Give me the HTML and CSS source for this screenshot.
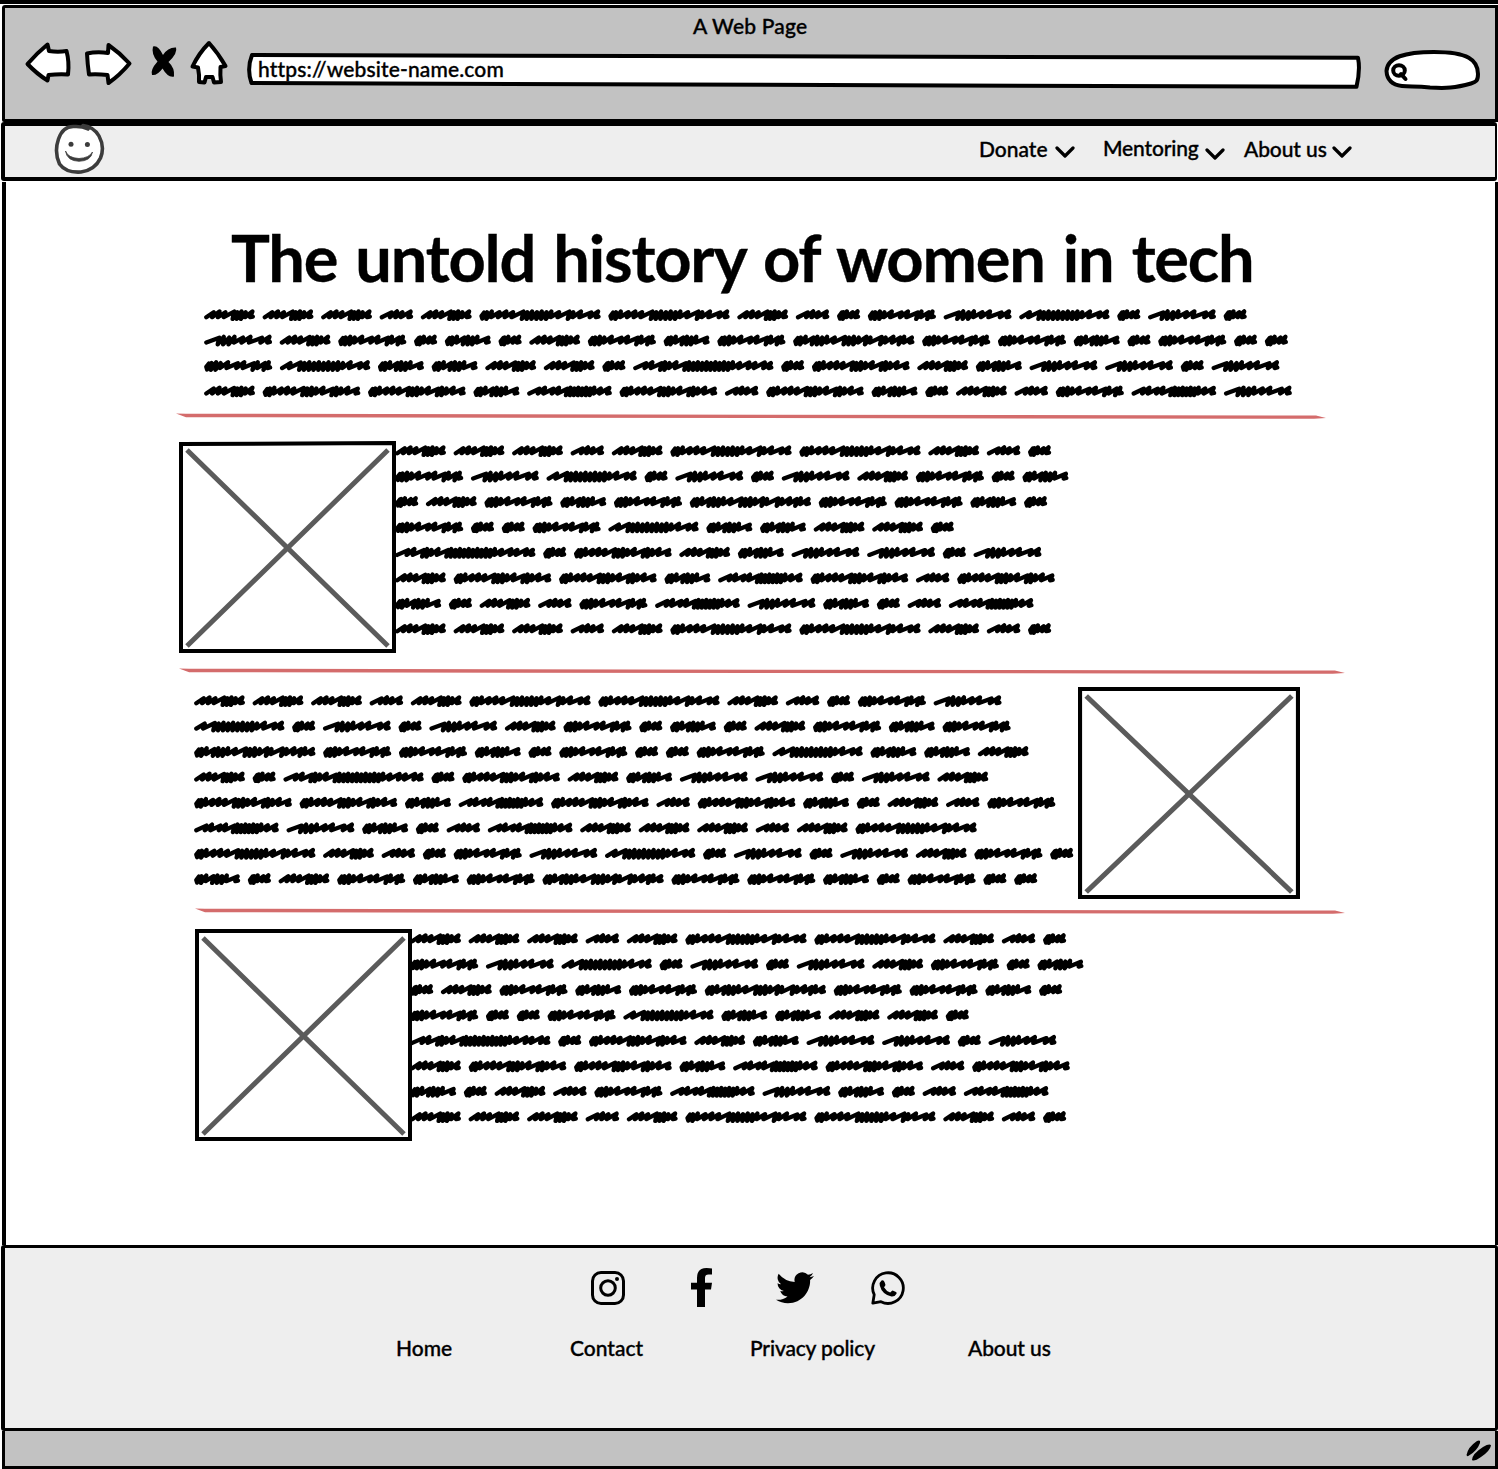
FILE: index.html
```html
<!DOCTYPE html>
<html lang="en">
<head>
<meta charset="utf-8">
<title>A Web Page</title>
<link rel="stylesheet" href="styles.css">
</head>
<body>
<div class="window">
  <header class="chrome">
    <div class="chrome-title">A Web Page</div>
    <div class="toolbar">
      <svg class="tools" viewBox="20 36 215 52" width="215" height="52">
        <g class="ink-outline">
          <path d="M27.5 64 Q37 53 47.5 44.5 L49 51 Q58 52.500 66.500 51 Q69.500 62 68 74.500 Q58 74 48.500 75 L47.500 80.500 Q37 74 27.500 64Z"/>
          <path d="M87 53.500 Q97 51.500 108 53 L108.500 45 Q120 53 129.500 63.500 Q120 75 108.500 83 L107.500 75 Q98 74 89 74.500 Q87.500 64 87 53.500Z"/>
          <path d="M209 43 Q218 53 225.500 66 L220.500 67 Q220 75 221 82 L214 82.500 L212.500 77 H206 L204.500 82.500 L199 82 Q199.500 75 198 67.500 L192.500 66.500 Q199 53 209 43Z"/>
        </g>
        <path d="M153 46.500 Q158 44.500 163 55 Q168 47 176 47.500 Q178 53 168.500 62 Q175 68 174 76.500 Q168 78 162.500 68.500 Q157 76 152 75 Q150 70 157.500 61.500 Q151 54 153 46.500Z"/>
      </svg>
      <div class="address">
        <svg class="address-frame" viewBox="246 51 1116 40" width="1116" height="40">
          <path class="ink-outline" d="M252 55 Q800 54.500 1358 57.800 Q1360.500 70 1356.500 86.800 Q800 86.500 251.500 83 Q246.500 69 252 55Z"/>
        </svg>
        <span class="address-text">https://website-name.com</span>
      </div>
      <svg class="search" viewBox="1382 48 100 44" width="100" height="44">
        <g class="ink-outline">
          <path d="M1386.500 71 C1387.500 57 1405 52 1434 52 C1468 52 1478 60 1478 74 C1478 81 1476 82 1471 83.500 C1455 88 1446 88.500 1430 87.500 C1415 86 1410 87 1402 86 C1393 85 1387 80 1386.500 71Z"/>
          <ellipse cx="1399" cy="70.500" rx="5.800" ry="5.200"/>
          <path d="M1401 74 L1405.500 79"/>
        </g>
      </svg>
    </div>
  </header>

  <nav class="site-nav">
    <svg class="logo" viewBox="53 122 54 54" width="54" height="54">
      <path class="face" d="M83 125.500 Q94 127 99 136 Q105 147 100.500 158 Q95 170 81 172 Q66 173 59.500 164 Q54 152 58.500 139 Q63 126 74 126.500 Q82 126 88 129"/>
      <circle cx="71" cy="144.200" r="2.500"/><circle cx="87.400" cy="144.500" r="2.500"/>
      <path class="smile" d="M65.500 151 Q68 158 79 158.500 Q89 158 92.500 152 Q91 161 79 161.300 Q67 161 65.500 151Z"/>
    </svg>
    <div class="menu">
      <span class="menu-item donate">Donate</span>
      <svg class="chevron" viewBox="0 0 20 12" width="20" height="12"><path d="M2 2 L10 10 L18 2"/></svg>
      <span class="menu-item mentoring">Mentoring</span>
      <svg class="chevron low" viewBox="0 0 20 12" width="20" height="12"><path d="M2 2 L10 10 L18 2"/></svg>
      <span class="menu-item about">About us</span>
      <svg class="chevron" viewBox="0 0 20 12" width="20" height="12"><path d="M2 2 L10 10 L18 2"/></svg>
    </div>
  </nav>

  <main class="page">
    <h1>The untold history of women in tech</h1>
    <div class="scribble intro" data-words="AAABACCABDEFGDFD FAEDHDAEHEIEEHDEDD EGHHAADJDKAHFFDF AKKHLKBKHDABELF"></div>
    <svg class="rule rule-one" viewBox="0 0 1150 6" preserveAspectRatio="none"><path d="M0 .500 L10 .700 L1140 2.600 L1150 5 L1138 5.800 L10 4.200Z"/></svg>

    <section class="story story-one">
      <svg class="picture" viewBox="0 0 217 212" preserveAspectRatio="none"><path class="frame" d="M2 3 L215 2 V210 H2Z"/><path class="cross" d="M8 9 L209 205 M209 9 L8 205"/></svg>
      <div class="scribble" data-words="AAABACCABD EFGDFDFAEDH DAEHEIEEHD EDDEGHHAAD JDKAHFFDF AKKHLKBK HDABELFHDBL AAABACCABD"></div>
    </section>
    <svg class="rule rule-two" viewBox="0 0 1150 6" preserveAspectRatio="none"><path d="M0 .500 L10 .700 L1140 2.600 L1150 5 L1138 5.800 L10 4.200Z"/></svg>

    <section class="story story-two">
      <div class="scribble" data-words="AAABACCABDEF GDFDFAEDHDAEHE IEEHDEDDEGHHA ADJDKAHFFDFA KKHLKBKHDABE LFHDBLAAABAC CABDEFGDFDFAED HDAEHEIEEHDEDD"></div>
      <svg class="picture" viewBox="0 0 217 212" preserveAspectRatio="none"><path class="frame" d="M2 2 H215 V210 H2Z"/><path class="cross" d="M8 9 L209 205 M209 9 L8 205"/></svg>
    </section>
    <svg class="rule rule-three" viewBox="0 0 1150 6" preserveAspectRatio="none"><path d="M0 .500 L10 .700 L1140 2.600 L1150 5 L1138 5.800 L10 4.200Z"/></svg>

    <section class="story story-three">
      <svg class="picture" viewBox="0 0 217 212" preserveAspectRatio="none"><path class="frame" d="M2 2 H215 V210 H2Z"/><path class="cross" d="M8 9 L209 205 M209 9 L8 205"/></svg>
      <div class="scribble" data-words="AAABACCABD EFGDFDFAEDH DAEHEIEEHD EDDEGHHAAD JDKAHFFDF AKKHLKBK HDABELFHDBL AAABACCABD"></div>
    </section>
  </main>

  <footer class="footer">
    <div class="social">
      <svg class="instagram" viewBox="0 0 34 34" width="34" height="34"><rect x="1.500" y="1.500" width="31" height="31" rx="8.500"/><circle cx="17" cy="17" r="7.300"/><circle class="dot" cx="26" cy="8" r="2"/></svg>
      <svg class="facebook" viewBox="0 0 21 39" width="21" height="39"><path d="M6 39 V21.500 H0 V14.800 H6 V10 Q6 0 15.500 0 Q19 0 21 .600 V6.600 H17.500 Q14 6.600 14 10 V14.800 H21 L20 21.500 H14 V39Z"/></svg>
      <svg class="twitter" viewBox="0 2 16 13.200" width="38" height="32"><path d="M5.026 15c6.038 0 9.341-5.003 9.341-9.334 0-.14 0-.282-.006-.422A6.685 6.685 0 0 0 16 3.542a6.658 6.658 0 0 1-1.889.518 3.301 3.301 0 0 0 1.447-1.817 6.533 6.533 0 0 1-2.087.793A3.286 3.286 0 0 0 7.875 6.03a9.325 9.325 0 0 1-6.767-3.429 3.289 3.289 0 0 0 1.018 4.382A3.323 3.323 0 0 1 .64 6.575v.045a3.288 3.288 0 0 0 2.632 3.218 3.203 3.203 0 0 1-.865.115 3.230 3.230 0 0 1-.614-.057 3.283 3.283 0 0 0 3.067 2.277A6.588 6.588 0 0 1 .78 13.580a6.320 6.320 0 0 1-.78-.045A9.344 9.344 0 0 0 5.026 15z"/></svg>
      <svg class="whatsapp" viewBox="0 0 34 34" width="34" height="34"><path class="bubble" d="M3.200 23.700 A15.300 15.300 0 1 1 10 30.700 L1.800 32.200Z"/><path d="M10.500 9.500 Q12.800 8.800 13.500 11 L14.400 13.500 Q14.700 14.500 13 16.300 Q15.500 20.500 19.200 21.600 L20.800 19.900 Q21.300 19.300 22.200 19.700 L25 21 Q26 21.600 25.500 22.700 Q24 25.800 20.500 25.500 Q11 23.500 8.800 14.500 Q8.300 11 10.500 9.500Z"/></svg>
    </div>
    <div class="links">
      <span class="link home">Home</span>
      <span class="link contact">Contact</span>
      <span class="link privacy">Privacy policy</span>
      <span class="link about-us">About us</span>
    </div>
  </footer>
  <div class="status">
    <svg viewBox="1464 1438 30 26" width="30" height="26"><path d="M1466.500 1455 Q1468 1447 1477 1441 Q1481 1439.500 1480 1443 Q1477 1451 1469 1455.500 Q1467 1457 1466.500 1455ZM1472 1460 Q1472 1454 1483 1447 Q1490 1443 1491 1445.500 Q1490 1451 1481 1457 Q1474 1462 1472 1460Z"/></svg>
  </div>
</div>
<script src="scribble.js"></script>
</body>
</html>
```
FILE: styles.css
```css
* { box-sizing: border-box; }
body { margin: 0; background: #fff; color: #000; font-family: Lato, "Open Sans", sans-serif; font-size: 21px; line-height: 26px; -webkit-text-stroke: .35px #000; }
svg { display: block; flex: none; }
.window { width: 1498px; height: 1469px; border-top: 4px solid #000; overflow: hidden; }

.ink-outline { fill: #fff; stroke: #000; stroke-width: 4; stroke-linejoin: round; stroke-linecap: round; }

.chrome { height: 117px; margin: 1px 0 0 2px; background: #c2c2c2; border: 3px solid #000; border-radius: 3px 0 0 2px; }
.chrome-title { margin-left: 688px; padding-top: 5px; width: 130px; height: 28px; font-weight: 500; letter-spacing: .2px; white-space: nowrap; }
.toolbar { display: flex; height: 56px; }
.tools { margin-left: 15px; }
.address { position: relative; margin: 15px 0 0 11px; width: 1116px; height: 40px; }
.address-frame { position: absolute; left: 0; top: 0; }
.address-text { position: relative; display: block; padding: 5px 0 0 12px; font-weight: 500; letter-spacing: .15px; white-space: nowrap; }
.search { margin: 12px 0 0 20px; }

.site-nav { display: flex; height: 59px; margin: 0 1px 0 1px; background: #eee; border: 4px solid #000; border-right-width: 2px; border-radius: 3px; }
.logo { margin: -4px 0 0 48px; fill: #3c3c3c; }
.face { fill: #fff; stroke: #3c3c3c; stroke-width: 3.6; stroke-linecap: round; }
.smile { stroke: #3c3c3c; stroke-width: .8; }
.menu { display: flex; padding: 10px 0 0 872px; font-weight: 500; white-space: nowrap; }
.menu-item.donate { width: 76px; }
.menu-item.mentoring { width: 102px; margin: -1px 0 0 28px; letter-spacing: -.15px; }
.menu-item.about { width: 88px; margin-left: 19px; letter-spacing: -.1px; }
.chevron { margin-top: 10px; fill: none; stroke: #000; stroke-width: 3.2; stroke-linecap: round; stroke-linejoin: round; }
.chevron.low { margin-top: 12px; }

.page { height: 1063px; margin: 1px 0 0 2px; border-left: 4px solid #000; border-right: 3px solid #000; background: #fff; }
h1 { margin: 0; padding: 33px 0 0 225px; height: 119px; font-size: 65px; line-height: 84px; font-weight: 700; letter-spacing: -1.2px; word-spacing: 3.5px; white-space: nowrap; }
.scribble svg { overflow: visible; fill: none; stroke: #000; stroke-width: 4.3; stroke-linejoin: round; stroke-linecap: round; }
.intro { margin: -1px 0 0 198px; width: 1100px; height: 113px; }
.rule { height: 6px; fill: #d46c6c; }
.rule-one { margin-left: 170px; width: 1150px; }
.rule-two { margin: 15px 0 0 173px; width: 1166px; }
.rule-three { margin: 9px 0 0 189px; width: 1150px; }
.story { display: flex; }
.picture { width: 217px; height: 212px; }
.frame { fill: #fff; stroke: #000; stroke-width: 4; }
.cross { fill: none; stroke: #5b5b5b; stroke-width: 5; }
.story-one { margin: 22px 0 0 173px; }
.story-one .scribble { margin: -5px 0 0 -1px; }
.story-two { margin: 13px 0 0 189px; }
.story-two .scribble { width: 884px; margin: -1px 0 0 -1px; }
.story-two .picture { width: 222px; }
.story-three { margin: 15px 0 0 189px; }
.story-three .scribble { margin: -5px 0 0 -2px; }

.footer { height: 186px; margin: 0 0 0 1px; background: #eee; border: 3px solid #000; border-left-width: 4px; border-radius: 3px; }
.social { display: flex; align-items: center; height: 39px; margin: 20px 0 0 586px; }
.instagram { fill: none; stroke: #000; stroke-width: 3; }
.instagram .dot { fill: #000; stroke: none; }
.facebook { margin-left: 66px; }
.twitter { margin-left: 64px; }
.whatsapp { margin-left: 57px; }
.bubble { fill: none; stroke: #000; stroke-width: 2.8; stroke-linejoin: round; }
.links { display: flex; margin: 28px 0 0 391px; font-weight: 500; white-space: nowrap; }
.home { width: 174px; }
.contact { width: 180px; }
.privacy { width: 218px; letter-spacing: -.15px; }
.about-us { letter-spacing: -.1px; }
.status { display: flex; justify-content: flex-end; height: 38px; margin: 0 0 0 2px; padding: 7px 1px 0 0; background: #c2c2c2; border: 3px solid #000; border-top: 0; }
```
FILE: scribble.js
```js
// Each placeholder word: drawn width, then its strokes
// (a = tight loop, i = open stroke, z = long wave).
const WORDS = {
  A: [50.5, "iiizaaai"],
  B: [33.2, "ziiz"],
  C: [121, "aaiiizaaaaaaizaizi"],
  D: [22.8, "aaii"],
  E: [67.8, "aaaizizaia"],
  F: [67.6, "zaaaiizi"],
  G: [90, "izaaaaaaaaaizi"],
  H: [45.7, "aaiaaaz"],
  I: [121, "aaiaaaizaaaiazaiiai"],
  J: [140, "zizaaizaaaaaaaaaaaizizi"],
  K: [97.4, "aaiiizaaaizaaiz"],
  L: [84.4, "zizizaaaaaaaiz"]
};
const STEP = { a: 4.4, i: 6.2, z: 9.4 };
const GAP = 8;
const LINE = 25.43;

function wordPath(key, x, y) {
  const [width, strokes] = WORDS[key];
  const total = [...strokes].reduce((sum, s) => sum + STEP[s], 0);
  const scale = (width - 6) / total;
  let left = x + 2.3;
  let d = "";
  [...strokes].forEach((s, n) => {
    const step = STEP[s] * scale;
    const low = s === "a" ? 3.9 : 2.2;
    const high = (n % 2 ? -3.6 : -2.8) + (s === "z" ? .2 : 0);
    const lean = s === "a" ? .7 : 1.6;
    // A word opening with a tight loop starts with a round blot.
    if (n === 0 && s === "a") {
      d += `M${(left + 2.6).toFixed(1)} ${(y - 2.4).toFixed(1)}L${left.toFixed(1)} ${(y + 1).toFixed(1)}L${(left + .8).toFixed(1)} ${(y + 3.6).toFixed(1)}`;
    } else {
      d += (n ? "L" : "M") + left.toFixed(1) + " " + (y + low).toFixed(1);
    }
    d += "L" + (left + step + lean).toFixed(1) + " " + (y + high).toFixed(1);
    left += step;
    if (n === strokes.length - 1) d += `L${(left - .6).toFixed(1)} ${(y + 2.2).toFixed(1)}L${(left + 2).toFixed(1)} ${(y + 1.6).toFixed(1)}`;
  });
  return d;
}

document.querySelectorAll(".scribble").forEach(block => {
  const lines = block.dataset.words.split(" ");
  let d = "";
  lines.forEach((line, row) => {
    let x = 0;
    for (const key of line) {
      d += wordPath(key, x, 15 + row * LINE);
      x += WORDS[key][0] + GAP;
    }
  });
  block.innerHTML = `<svg width="860" height="${Math.round(lines.length * LINE)}"><path d="${d}"/></svg>`;
});
```
